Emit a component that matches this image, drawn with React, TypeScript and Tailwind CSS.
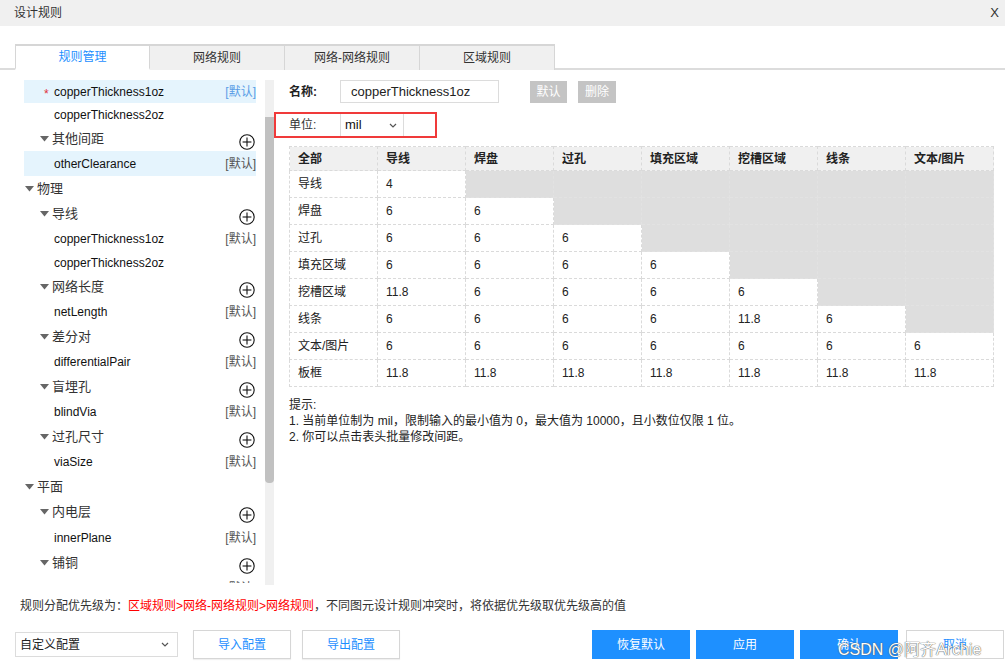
import React from "react";

type Row =
  | { kind: "group"; level: 0 | 1; label: string; plus?: boolean; h: number }
  | { kind: "leaf"; label: string; def?: "blue" | "gray"; star?: boolean; sel?: boolean; h: number };

const tree: Row[] = [
  { kind: "leaf", label: "copperThickness1oz", def: "blue", star: true, sel: true, h: 23 },
  { kind: "leaf", label: "copperThickness2oz", h: 23 },
  { kind: "group", level: 1, label: "其他间距", plus: true, h: 25 },
  { kind: "leaf", label: "otherClearance", def: "gray", sel: true, h: 25 },
  { kind: "group", level: 0, label: "物理", h: 25 },
  { kind: "group", level: 1, label: "导线", plus: true, h: 26 },
  { kind: "leaf", label: "copperThickness1oz", def: "gray", h: 24 },
  { kind: "leaf", label: "copperThickness2oz", h: 23 },
  { kind: "group", level: 1, label: "网络长度", plus: true, h: 25 },
  { kind: "leaf", label: "netLength", def: "gray", h: 25 },
  { kind: "group", level: 1, label: "差分对", plus: true, h: 25 },
  { kind: "leaf", label: "differentialPair", def: "gray", h: 25 },
  { kind: "group", level: 1, label: "盲埋孔", plus: true, h: 25 },
  { kind: "leaf", label: "blindVia", def: "gray", h: 25 },
  { kind: "group", level: 1, label: "过孔尺寸", plus: true, h: 25 },
  { kind: "leaf", label: "viaSize", def: "gray", h: 25 },
  { kind: "group", level: 0, label: "平面", h: 25 },
  { kind: "group", level: 1, label: "内电层", plus: true, h: 26 },
  { kind: "leaf", label: "innerPlane", def: "gray", h: 25 },
  { kind: "group", level: 1, label: "铺铜", plus: true, h: 25 },
  { kind: "leaf", label: "copperRegion", def: "gray", h: 25 },
];

const cols = ["全部", "导线", "焊盘", "过孔", "填充区域", "挖槽区域", "线条", "文本/图片"];

const rows: { label: string; vals: string[] }[] = [
  { label: "导线", vals: ["4"] },
  { label: "焊盘", vals: ["6", "6"] },
  { label: "过孔", vals: ["6", "6", "6"] },
  { label: "填充区域", vals: ["6", "6", "6", "6"] },
  { label: "挖槽区域", vals: ["11.8", "6", "6", "6", "6"] },
  { label: "线条", vals: ["6", "6", "6", "6", "11.8", "6"] },
  { label: "文本/图片", vals: ["6", "6", "6", "6", "6", "6", "6"] },
  { label: "板框", vals: ["11.8", "11.8", "11.8", "11.8", "11.8", "11.8", "11.8"] },
];

function Caret() {
  return (
    <svg width="9" height="6" viewBox="0 0 9 6" className="shrink-0">
      <polygon points="0,0 9,0 4.5,5.5" fill="#666" />
    </svg>
  );
}

function PlusCircle() {
  return (
    <svg width="16" height="16" viewBox="0 0 16 16" className="shrink-0 translate-y-[3px]">
      <circle cx="8" cy="8" r="7.2" fill="none" stroke="#111" strokeWidth="1.1" />
      <line x1="3.6" y1="8" x2="12.4" y2="8" stroke="#111" strokeWidth="1.1" />
      <line x1="8" y1="3.6" x2="8" y2="12.4" stroke="#111" strokeWidth="1.1" />
    </svg>
  );
}

function TreeRow({ row }: { row: Row }) {
  if (row.kind === "group") {
    return (
      <div
        className={`flex items-center justify-between pr-[1px] ${row.level === 0 ? "pl-[1px]" : "pl-[16px]"}`}
        style={{ height: row.h }}
      >
        <div className="flex items-center gap-[3px] text-[13px] text-[#333]">
          <Caret />
          <span>{row.label}</span>
        </div>
        {row.plus && <PlusCircle />}
      </div>
    );
  }
  return (
    <div
      className={`relative flex items-center justify-between pl-[30px] text-[12px] text-[#111] ${row.sel ? "bg-[#e5f4fd]" : ""}`}
      style={{ height: row.h }}
    >
      {row.star && <span className="absolute left-[20px] top-[5px] text-[12px] text-[#e0303a]">*</span>}
      <span>{row.label}</span>
      {row.def && (
        <span className={row.def === "blue" ? "text-[#5a9de6]" : "text-[#555]"}>[默认]</span>
      )}
    </div>
  );
}

export default function App() {
  return (
    <div className="relative w-[1005px] h-[668px] overflow-hidden bg-white text-[#333] font-[family-name:'Liberation_Sans','Noto_Sans_CJK_SC',sans-serif]">
      {/* Title bar */}
      <div className="flex h-[26px] items-center justify-between bg-[#f0f0f0] pl-[14px] pr-[6px] text-[12px] text-[#333]">
        <span>设计规则</span>
        <span className="text-[13px]">X</span>
      </div>

      {/* Tabs */}
      <div className="mt-[18px] flex border-b-2 border-[#dcdcdc] pl-[15px]">
        {["规则管理", "网络规则", "网络-网络规则", "区域规则"].map((t, i) => (
          <div
            key={t}
            className={`-mb-[2px] flex h-[26px] w-[135px] items-center justify-center border-t-2 border-r border-[#d6d6d6] text-[12px] ${
              i === 0
                ? "border-l bg-white text-[#1e8fff] border-b-2 border-b-white"
                : "bg-[#f0f0f0] text-[#333]"
            }`}
          >
            {t}
          </div>
        ))}
      </div>

      {/* Middle */}
      <div className="flex h-[515px]">
        {/* Tree */}
        <div className="flex w-[274px] shrink-0">
          <div className="ml-[24px] mt-[10px] h-[503px] w-[232px] overflow-hidden">
            {tree.map((r, i) => (
              <TreeRow key={i} row={r} />
            ))}
          </div>
          <div className="ml-[9px] mt-[10px] h-[505px] w-[9px] bg-[#f0f0f0]">
            <div className="mt-[37px] h-[366px] w-full rounded-b-[4px] bg-[#c1c1c1]" />
          </div>
        </div>

        {/* Right panel */}
        <div className="flex-1 pt-[10px]">
          <div className="flex h-[23px] items-center pl-[15px]">
            <span className="w-[51px] text-[12px] font-bold text-[#222]">名称:</span>
            <div className="flex h-[23px] w-[159px] items-center border border-[#dcdcdc] pl-[10px] text-[13px] text-[#222]">
              copperThickness1oz
            </div>
            <button className="ml-[31px] h-[22px] w-[37px] bg-[#c4c4c4] text-[12px] text-white">默认</button>
            <button className="ml-[11px] h-[22px] w-[38px] bg-[#c4c4c4] text-[12px] text-white">删除</button>
          </div>

          <div className="mt-[9px] flex h-[26px] w-[163px] items-center border-2 border-[#f03a3a] pl-[13px]">
            <span className="w-[51px] text-[12px] text-[#333]">单位:</span>
            <div className="flex h-full w-[64px] items-center justify-between border-x border-[#dcdcdc] pl-[4px] pr-[6px] text-[13px] text-[#111]">
              <span>mil</span>
              <svg width="8" height="5" viewBox="0 0 8 5">
                <polyline points="1,1 4,4 7,1" fill="none" stroke="#555" strokeWidth="1.2" />
              </svg>
            </div>
          </div>

          <table className="ml-[15px] mt-[8px] w-[704px] table-fixed border-collapse text-[12px] text-[#222]">
            <thead>
              <tr className="h-[24px] bg-[#f0f0f0]">
                {cols.map((c) => (
                  <th key={c} className="w-[88px] border border-dashed border-[#dadada] pl-[8px] text-left font-bold">
                    {c}
                  </th>
                ))}
              </tr>
            </thead>
            <tbody>
              {rows.map((r) => (
                <tr key={r.label} className="h-[27px]">
                  <td className="border border-dashed border-[#dadada] pl-[8px]">{r.label}</td>
                  {Array.from({ length: 7 }).map((_, j) => {
                    const v = r.vals[j];
                    return v !== undefined ? (
                      <td key={j} className="border border-dashed border-[#dadada] pl-[8px]">
                        {v}
                      </td>
                    ) : (
                      <td key={j} className="border border-dashed border-[#e2e2e2] bg-[#dedede]" />
                    );
                  })}
                </tr>
              ))}
            </tbody>
          </table>

          <div className="ml-[15px] mt-[10px] text-[12px] leading-[16px] text-[#222]">
            <div>提示:</div>
            <div>1. 当前单位制为 mil，限制输入的最小值为 0，最大值为 10000，且小数位仅限 1 位。</div>
            <div>2. 你可以点击表头批量修改间距。</div>
          </div>
        </div>
      </div>

      {/* Priority note */}
      <div className="mt-[12px] pl-[20px] text-[12px] text-[#333]">
        规则分配优先级为：<span className="text-[#f00]">区域规则&gt;网络-网络规则&gt;网络规则</span>，不同图元设计规则冲突时，将依据优先级取优先级高的值
      </div>

      {/* Bottom controls */}
      <div className="mt-[15px] flex items-center pl-[15px]">
        <div className="flex h-[25px] w-[163px] items-center justify-between border border-[#dcdcdc] pl-[4px] pr-[8px] text-[12px] text-[#222]">
          <span>自定义配置</span>
          <svg width="8" height="5" viewBox="0 0 8 5">
            <polyline points="1,1 4,4 7,1" fill="none" stroke="#555" strokeWidth="1.2" />
          </svg>
        </div>
        <button className="ml-[15px] h-[29px] w-[98px] border border-[#d6d6d6] bg-white text-[12px] text-[#1e8fff] shadow-[0_1px_1px_rgba(0,0,0,0.06)]">
          导入配置
        </button>
        <button className="ml-[11px] h-[29px] w-[98px] border border-[#d6d6d6] bg-white text-[12px] text-[#1e8fff] shadow-[0_1px_1px_rgba(0,0,0,0.06)]">
          导出配置
        </button>
        <div className="flex-1" />
        <button className="h-[29px] w-[98px] bg-[#1e90ff] text-[12px] text-white">恢复默认</button>
        <button className="ml-[6px] h-[29px] w-[98px] bg-[#1e90ff] text-[12px] text-white">应用</button>
        <button className="ml-[6px] h-[29px] w-[98px] bg-[#1e90ff] text-[12px] text-white">确认</button>
        <button className="ml-[8px] mr-[1px] h-[29px] w-[98px] border border-[#d6d6d6] bg-white text-[12px] text-[#1e8fff]">
          取消
        </button>
      </div>

      {/* Watermark */}
      <div className="pointer-events-none absolute left-[838px] top-[638px] text-[16px] text-white [text-shadow:0_0_1px_#555,0_0_1px_#555]">
        CSDN @阿齐Archie
      </div>
    </div>
  );
}
